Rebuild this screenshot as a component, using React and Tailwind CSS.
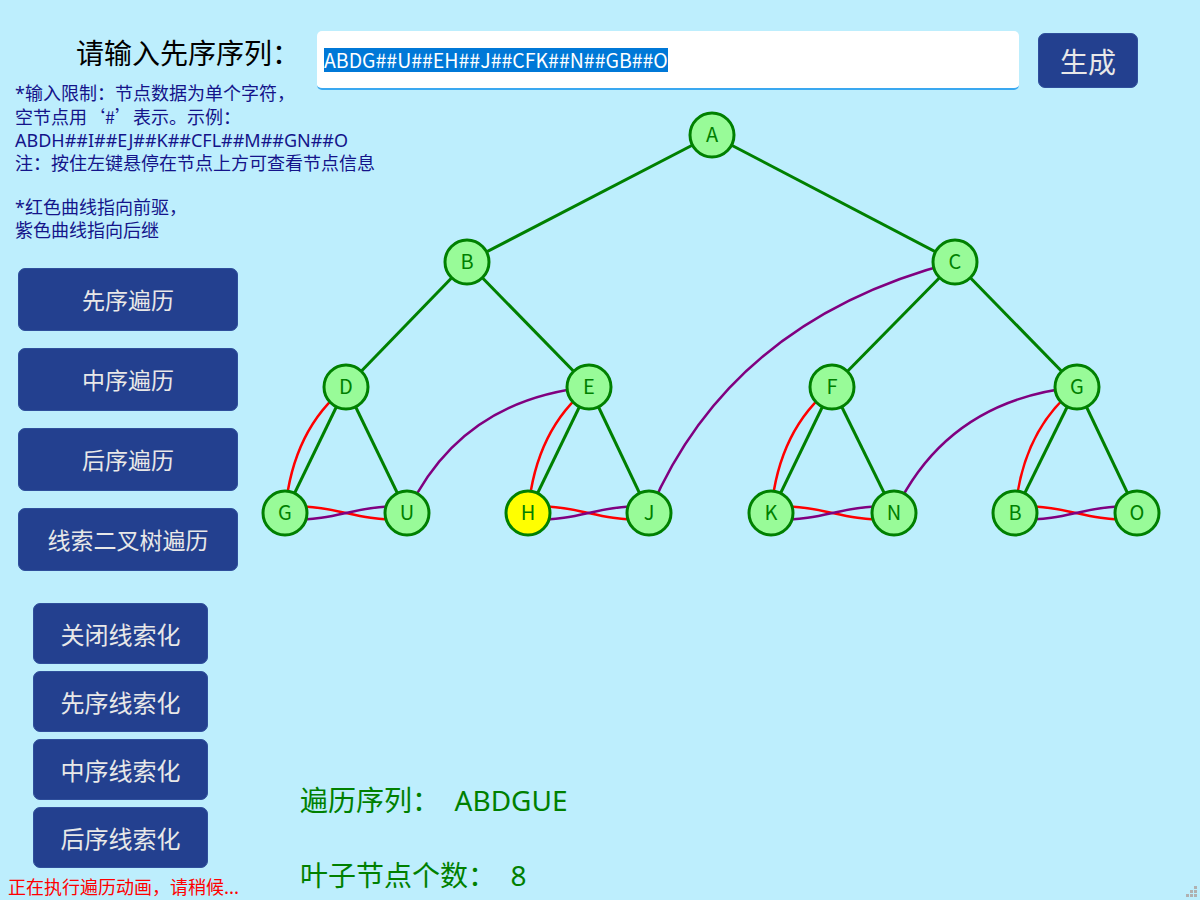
import React from 'react';

const FONT = "font-[family-name:'Noto_Sans_CJK_SC','Noto_Sans',sans-serif]";
const MIXED = "font-[family-name:'Noto_Sans','Noto_Sans_CJK_SC',sans-serif]";

const NODES = [
  { id: 'A', x: 712, y: 135 },
  { id: 'B', x: 467, y: 262 },
  { id: 'C', x: 955, y: 262 },
  { id: 'D', x: 346, y: 387 },
  { id: 'E', x: 589, y: 387 },
  { id: 'F', x: 832, y: 387 },
  { id: 'G', x: 1077, y: 387 },
  { id: 'G2', label: 'G', x: 285, y: 513 },
  { id: 'U', x: 407, y: 513 },
  { id: 'H', x: 528, y: 513, active: true },
  { id: 'J', x: 649, y: 513 },
  { id: 'K', x: 771, y: 513 },
  { id: 'N', x: 894, y: 513 },
  { id: 'B2', label: 'B', x: 1015, y: 513 },
  { id: 'O', x: 1137, y: 513 },
];

const EDGES = [
  ['A', 'B'], ['A', 'C'], ['B', 'D'], ['B', 'E'], ['C', 'F'], ['C', 'G'],
  ['D', 'G2'], ['D', 'U'], ['E', 'H'], ['E', 'J'], ['F', 'K'], ['F', 'N'],
  ['G', 'B2'], ['G', 'O'],
];

const byId = Object.fromEntries(NODES.map((n) => [n.id, n]));

function quad(a, b, dx, dy) {
  const p = byId[a];
  const q = byId[b];
  return `M${p.x} ${p.y} Q${p.x + dx} ${q.y + dy} ${q.x} ${q.y}`;
}

// sibling pair: red goes right -> left, purple left -> right
function sCurve(a, b, flip) {
  const p = byId[a];
  const q = byId[b];
  const mid = (p.x + q.x) / 2;
  const y0 = p.y + (flip ? 7 : -7);
  const y1 = q.y + (flip ? -7 : 7);
  return `M${p.x} ${y0} C${mid} ${y0} ${mid} ${y1} ${q.x} ${y1}`;
}

const RED = [
  quad('G2', 'D', 7, 43),
  quad('H', 'E', 7, 43),
  quad('K', 'F', 7, 43),
  quad('B2', 'G', 7, 43),
  sCurve('G2', 'U', false),
  sCurve('H', 'J', false),
  sCurve('K', 'N', false),
  sCurve('B2', 'O', false),
];

const PURPLE = [
  quad('U', 'E', 53, 13),
  quad('N', 'G', 53, 13),
  quad('J', 'C', 81, 58),
  sCurve('G2', 'U', true),
  sCurve('H', 'J', true),
  sCurve('K', 'N', true),
  sCurve('B2', 'O', true),
];

const TRAVERSE_BUTTONS = ['先序遍历', '中序遍历', '后序遍历', '线索二叉树遍历'];
const THREAD_BUTTONS = ['关闭线索化', '先序线索化', '中序线索化', '后序线索化'];

function TreeCanvas() {
  return (
    <svg width="950" height="470" viewBox="250 90 950 470" className="block">
      {EDGES.map(([a, b]) => (
        <line
          key={`${a}-${b}`}
          x1={byId[a].x}
          y1={byId[a].y}
          x2={byId[b].x}
          y2={byId[b].y}
          stroke="#008000"
          strokeWidth="3"
        />
      ))}
      {RED.map((d) => (
        <path key={d} d={d} fill="none" stroke="#ff0000" strokeWidth="2.5" />
      ))}
      {PURPLE.map((d) => (
        <path key={d} d={d} fill="none" stroke="#800080" strokeWidth="2.5" />
      ))}
      {NODES.map((node) => (
        <g key={node.id}>
          <circle
            cx={node.x}
            cy={node.y}
            r="22"
            fill={node.active ? '#ffff00' : '#98fb98'}
            stroke="#008000"
            strokeWidth="3"
          />
          <text
            x={node.x}
            y={node.y + 7}
            textAnchor="middle"
            fontSize="20"
            fill="#008000"
            fontFamily="'Noto Sans CJK SC', sans-serif"
          >
            {node.label || node.id}
          </text>
        </g>
      ))}
    </svg>
  );
}

export default function App() {
  return (
    <div className={`relative flex h-[900px] w-[1200px] overflow-hidden bg-[#bdeefd] ${FONT}`}>
      <div className="flex w-[250px] shrink-0 flex-col">
        <h1 className="mt-[34px] whitespace-nowrap pl-[76px] text-[28px] leading-[36px] text-black">
          请输入先序序列：
        </h1>
        <div className={`mt-[12px] whitespace-nowrap pl-[15px] text-[18px] leading-[23px] text-[#14148a] ${MIXED}`}>
          <p>*输入限制：节点数据为单个字符，</p>
          <p>
            空节点用<span className={FONT}>‘#’</span>表示。示例：
          </p>
          <p>ABDH##I##EJ##K##CFL##M##GN##O</p>
          <p>注：按住左键悬停在节点上方可查看节点信息</p>
          <p className="mt-[21px]">*红色曲线指向前驱，</p>
          <p>紫色曲线指向后继</p>
        </div>

        <div className="mt-[26px] flex flex-col gap-[17px] pl-[18px]">
          {TRAVERSE_BUTTONS.map((label) => (
            <button
              key={label}
              type="button"
              className="h-[63px] w-[220px] rounded-[7px] border border-[#2f4f9c] bg-[#23408f] text-[23px] text-[#e8e8e8]"
            >
              {label}
            </button>
          ))}
        </div>

        <div className="mt-[32px] flex flex-col gap-[7px] pl-[33px]">
          {THREAD_BUTTONS.map((label) => (
            <button
              key={label}
              type="button"
              className="h-[61px] w-[175px] rounded-[7px] border border-[#2f4f9c] bg-[#23408f] text-[24px] text-[#e8e8e8]"
            >
              {label}
            </button>
          ))}
        </div>

        <p className="mt-[6px] whitespace-nowrap pl-[8px] text-[18px] leading-[24px] text-[#ff0000]">
          正在执行遍历动画，请稍候...
        </p>
      </div>

      <div className="flex flex-1 flex-col">
        <div className="mt-[31px] flex items-start">
          <div className="ml-[67px] flex h-[59px] w-[702px] items-center rounded-[5px] border-b-2 border-[#3aa8f0] bg-white pl-[7px]">
            <span className="bg-[#0078d7] text-[19.5px] leading-[24px] text-white">
              ABDG##U##EH##J##CFK##N##GB##O
            </span>
          </div>
          <button
            type="button"
            className="ml-[19px] mt-[2px] h-[55px] w-[100px] rounded-[7px] border border-[#2f4f9c] bg-[#23408f] text-[28px] text-[#e8e8e8]"
          >
            生成
          </button>
        </div>

        <TreeCanvas />

        <div className={`ml-[50px] mt-[220px] text-[28px] leading-[40px] text-[#008000] ${MIXED}`}>
          <p>遍历序列：&nbsp;&nbsp;ABDGUE</p>
          <p className="mt-[35px]">叶子节点个数：&nbsp;&nbsp;8</p>
        </div>
      </div>

      <svg className="absolute bottom-[2px] right-[2px]" width="14" height="14" viewBox="0 0 14 14">
        <rect x="10" y="2" width="3" height="3" fill="#b0b0b0" />
        <rect x="6" y="6" width="3" height="3" fill="#b0b0b0" />
        <rect x="10" y="6" width="3" height="3" fill="#b0b0b0" />
        <rect x="2" y="10" width="3" height="3" fill="#b0b0b0" />
        <rect x="6" y="10" width="3" height="3" fill="#b0b0b0" />
        <rect x="10" y="10" width="3" height="3" fill="#b0b0b0" />
      </svg>
    </div>
  );
}
